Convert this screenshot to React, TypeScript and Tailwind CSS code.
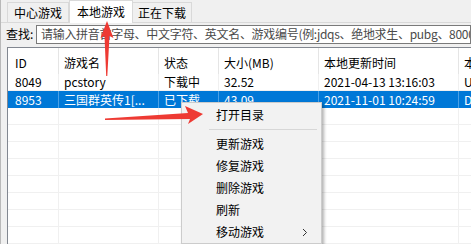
import React from 'react';

const font = { fontFamily: '"Noto Sans CJK SC", "Noto Sans", sans-serif' };

interface Row {
  id: string;
  name: string;
  status: string;
  size: string;
  time: string;
  extra: string;
}

const rows: Row[] = [
  { id: '8049', name: 'pcstory', status: '下载中', size: '32.52', time: '2021-04-13 13:16:03', extra: 'U' },
  { id: '8953', name: '三国群英传1[...', status: '已下载', size: '43.09', time: '2021-11-01 10:24:59', extra: 'D' },
];

const cols = 'grid grid-cols-[51px_100px_60px_100px_140px_1fr]';

const Tabs: React.FC = () => (
  <div className="flex items-end h-[23px] pl-[6px] border-b border-[#d9d9d9]">
    <div className="h-[20px] px-[6px] flex items-center border border-b-0 border-[#d9d9d9] bg-[#f0f0f0] text-[12px] text-black">
      中心游戏
    </div>
    <div className="h-[23px] px-[7px] -mb-px flex items-center border border-b-0 border-[#d9d9d9] bg-white text-[12px] text-black">
      本地游戏
    </div>
    <div className="h-[20px] px-[5px] flex items-center border border-b-0 border-l-0 border-[#d9d9d9] bg-[#f0f0f0] text-[12px] text-black">
      正在下载
    </div>
  </div>
);

const SearchBar: React.FC = () => (
  <div className="flex items-center h-[20px] mt-px pl-[5px]">
    <span className="text-[12px] text-black w-[30px]">查找:</span>
    <div className="flex-1 h-[19px] border border-[#7a7a7a] bg-white flex items-center pl-[4px] overflow-hidden whitespace-nowrap">
      <span className="text-[12px] text-[#4a4a4a] tracking-[-0.3px]">
        请输入拼音首字母、中文字符、英文名、游戏编号(例:jdqs、绝地求生、pubg、8000
      </span>
    </div>
  </div>
);

const GameTable: React.FC = () => (
  <div className="mt-[3px] ml-[6px] w-[520px] border-l border-t border-[#828790] bg-white text-[12px]">
    <div className={`${cols} h-[26px] text-black`}>
      {['ID', '游戏名', '状态', '大小(MB)', '本地更新时间', '本'].map((h, i) => (
        <div
          key={h}
          className={`flex items-center pt-[3px] border-r border-[#e5e5e5] ${i === 0 ? 'pl-[7px]' : 'pl-[5px]'}`}
        >
          {h}
        </div>
      ))}
    </div>
    {rows.map((r, idx) => {
      const selected = idx === 1;
      return (
        <div
          key={r.id}
          className={`${cols} h-[17px] ${selected ? 'bg-[#0078d7] text-white' : 'text-black border-b border-[#f0f0f0]'}`}
        >
          {[r.id, r.name, r.status, r.size, r.time, r.extra].map((c, i) => (
            <div
              key={i}
              className={`flex items-center whitespace-nowrap overflow-hidden border-r ${selected ? 'border-[#4aa0e6]' : 'border-[#f0f0f0]'} ${i === 0 ? 'pl-[7px]' : 'pl-[5px]'}`}
            >
              {c}
            </div>
          ))}
        </div>
      );
    })}
    {Array.from({ length: 8 }).map((_, i) => (
      <div key={i} className={`${cols} h-[17px] border-b border-[#f0f0f0]`}>
        {Array.from({ length: 6 }).map((__, j) => (
          <div key={j} className="border-r border-[#f0f0f0]" />
        ))}
      </div>
    ))}
  </div>
);

const ContextMenu: React.FC = () => {
  const item = 'h-[22px] flex items-center pl-[34px] pr-[10px] text-[12px] text-black';
  return (
    <div className="absolute left-[180px] top-[102px] w-[141px] bg-[#f2f2f2] border border-[#cccccc] shadow-[2px_2px_3px_rgba(0,0,0,0.3)] pt-px">
      <div className={item}>打开目录</div>
      <div className="h-px bg-[#d7d7d7] ml-[27px] mr-[4px] my-[3px]" />
      <div className={item}>更新游戏</div>
      <div className={item}>修复游戏</div>
      <div className={item}>删除游戏</div>
      <div className={item}>刷新</div>
      <div className={`${item} justify-between`}>
        <span>移动游戏</span>
        <svg width="6" height="9" viewBox="0 0 6 9" className="mr-[3px]">
          <polyline points="1,1 4.5,4.5 1,8" fill="none" stroke="#333" strokeWidth="1" />
        </svg>
      </div>
    </div>
  );
};

const Arrows: React.FC = () => (
  <svg className="absolute inset-0 pointer-events-none" width="471" height="244" viewBox="0 0 471 244">
    <polygon
      points="106,21 112.5,38 108.5,36 106.3,76 105.2,76 103.5,36 99.5,38"
      fill="#ee3a33"
    />
    <polygon
      points="202,114 187,124 189,119 104,120 104,118.6 187,113 184,106"
      fill="#ee3a33"
    />
  </svg>
);

export default function App() {
  return (
    <div className="relative w-[471px] h-[244px] overflow-hidden bg-[#f0f0f0] border-l border-[#b9b9b9]" style={font}>
      <Tabs />
      <SearchBar />
      <GameTable />
      <ContextMenu />
      <Arrows />
    </div>
  );
}
